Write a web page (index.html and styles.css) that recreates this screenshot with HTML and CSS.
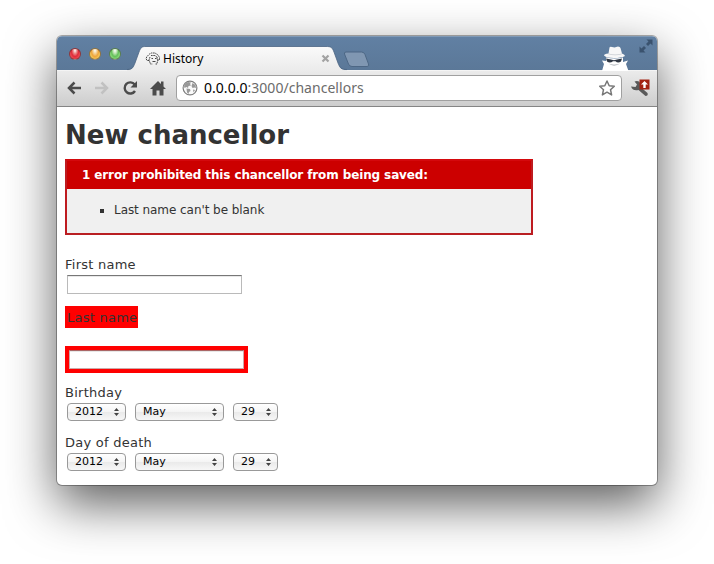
FILE: index.html
```html
<!DOCTYPE html>
<html lang="en">
<head>
<meta charset="utf-8">
<title>History</title>
<link rel="stylesheet" href="styles.css">
</head>
<body>
<div class="window">
  <header class="tabstrip">
    <div class="lights"><i class="light red"></i><i class="light yellow"></i><i class="light green"></i></div>
    <div class="tab">
      <svg class="tab-shape" width="224" height="25" viewBox="0 0 224 25">
        <defs><linearGradient id="tabfill" x1="0" y1="0" x2="0" y2="1"><stop offset="0" stop-color="#fafafa"/><stop offset="1" stop-color="#ebebeb"/></linearGradient></defs>
        <path d="M1 24C6 24 7 22 9 17L13 6C15 1 16 .5 20 .5H200C205 .5 206 1 208 6L212 17C214 22 215 24 221 24V25H1Z" fill="url(#tabfill)"/>
        <path d="M1 23.500C6 23.500 7 22 9 17L13 6C15 1 16 .5 20 .5H200C205 .5 206 1 208 6L212 17C214 22 215 23.500 221 23.500" fill="none" stroke="#4b6583" stroke-width=".8"/>
      </svg>
      <svg class="favicon" width="16" height="14" viewBox="0 0 16 14" fill="none" stroke="#333" stroke-width=".9">
        <path d="M4 8.500H2L1 6.500L2 4.500L4.500 2L6.500 1H10L13 3L14.500 5.500V8H12.500M5 5L4 8L5.500 12H7.500M12 5L12.500 8.500L12 12H10.500M6 3.500H10L12 5" stroke-dasharray="1.600 .7"/>
        <path d="M6.500 6.500H8M10 6.500H11.500M7.500 9.500H10.500" />
      </svg>
      <span class="tab-title">History</span>
      <svg class="tab-close" width="9" height="9" viewBox="0 0 9 9"><path d="M1.500 1.500L7.500 7.500M7.500 1.500L1.500 7.500" stroke="#a3a3a3" stroke-width="2.200"/></svg>
    </div>
    <svg class="newtab" width="28" height="17" viewBox="0 0 28 17"><path d="M3 1H18.500Q21 1 22 3.500L25.500 13Q26.500 15.500 24 15.500H9Q6.500 15.500 5.500 13L1.500 3Q1 1 3 1Z" fill="#8097b2" stroke="#4d6785"/></svg>
    <svg class="incognito" width="28" height="25" viewBox="0 0 28 25">
      <path d="M7.500 7.500L8.500 1.500Q9 .500 11 1L13.500 1.500L17 .500Q19 .500 19.500 2L21 7.500Q24 8.500 24 10Q20 12 13 12Q5 12 3 9.500Q3 8 7.500 7.500Z" fill="#f7f7f7"/>
      <path d="M7.500 7.500Q14 9.500 21 7.500L20.900 8.200Q14 10.200 7.400 8.200Z" fill="#c9cdd2"/>
      <path d="M5 11.500Q14 13.500 22 11.500L22 16L27 14.500L25 18L27.500 25H1L3 18L1 14.500L5 15Z" fill="#fff"/>
      <path d="M5 12.500Q9 13 13 14.200Q17 13 21 12.500L20 15.500Q17 17.500 14.500 15.200H12Q9 17.500 6 15.500Z" fill="#303844"/>
      <path d="M7.500 17.500Q13 21.500 19 17.500Q13 20 7.500 17.500Z" fill="#8b929b"/>
    </svg>
    <svg class="expand" width="16" height="16" viewBox="0 0 16 16" fill="#3a526e"><path d="M8.500 1.500H14.500V7.500L12.500 5.500L10 8L8 6L10.500 3.500ZM1.500 8.500L3.500 10.500L6 8L8 10L5.500 12.500L7.500 14.500H1.500Z"/></svg>
  </header>
  <nav class="toolbar">
    <svg class="back" width="16" height="16" viewBox="0 0 16 16"><path d="M8.500 2.500L3 8L8.500 13.500M3 8H15" fill="none" stroke="#4b4b4b" stroke-width="2.500"/></svg>
    <svg class="forward" width="16" height="16" viewBox="0 0 16 16"><path d="M7.500 2.500L13 8L7.500 13.500M13 8H1" fill="none" stroke="#c1c1c1" stroke-width="2.500"/></svg>
    <svg class="reload" width="16" height="16" viewBox="0 0 16 16"><path d="M12.700 4.500A5.600 5.600 0 1 0 13 11" fill="none" stroke="#4b4b4b" stroke-width="2.400"/><path d="M15 1V7.500H8.500Z" fill="#4b4b4b"/></svg>
    <svg class="home" width="16" height="16" viewBox="0 0 16 16"><path d="M8 1L11 4V1.500H13.500V6.500L16 9H13.500V15.500H9.500V10.500H6.500V15.500H2.500V9H0Z" fill="#4b4b4b"/></svg>
    <div class="omnibox">
      <svg class="globe" width="16" height="16" viewBox="0 0 16 16"><circle cx="8" cy="8" r="6.900" fill="#fafafa" stroke="#808080" stroke-width="1.200"/><path d="M3 3.500L6 2L9 2.500L8 4L9 5.500L6.500 6L6 8L4.500 7L2.500 8L2 6ZM4.500 8.500L8 9L8.500 11L7 12L6.500 14L5 12.500ZM10.500 3L13.500 5L14 8L12.500 7.500L10.500 8L9.500 6ZM11 9.500L13 10L11.500 12.500Z" fill="#999"/></svg>
      <span class="url"><b>0.0.0.0</b>:3000/chancellors</span>
      <svg class="star" width="18" height="18" viewBox="0 0 18 18"><path d="M9 2L11.200 6.700L16.300 7.200L12.500 10.700L13.600 15.900L9 13.200L4.400 15.900L5.500 10.700L1.700 7.200L6.800 6.700Z" fill="#fff" stroke="#777" stroke-width="1.500" stroke-linejoin="round"/></svg>
    </div>
    <svg class="wrench" width="20" height="19" viewBox="0 0 20 19"><path d="M1 7.500L5.500 8L7 5.500L4.500 2.500Q9 1 10.500 4.500Q11.200 7 10.500 8L17.500 14Q18.500 17 15.500 17L8.500 11Q3 12.500 1 7.500Z" fill="#5a5a5a"/><path d="M9.500 .5H19.500V10.500H9.500Z" fill="#a32312"/><path d="M14.500 2L18 5.500H15.700V9H13.300V5.500H11Z" fill="#fff"/></svg>
  </nav>
  <main class="page">
    <h1>New chancellor</h1>
    <section class="errors">
      <h2>1 error prohibited this chancellor from being saved:</h2>
      <ul><li>Last name can't be blank</li></ul>
    </section>
    <div class="field first">
      <label>First name</label>
      <div class="input"></div>
    </div>
    <div class="field-error-label"><label>Last name</label></div>
    <div class="field-error-input"><div class="input"></div></div>
    <div class="field">
      <label>Birthday</label>
      <div class="selects">
        <div class="select year">2012<i class="arrows"></i></div>
        <div class="select month">May<i class="arrows"></i></div>
        <div class="select day">29<i class="arrows"></i></div>
      </div>
    </div>
    <div class="field death">
      <label>Day of death</label>
      <div class="selects">
        <div class="select year">2012<i class="arrows"></i></div>
        <div class="select month">May<i class="arrows"></i></div>
        <div class="select day">29<i class="arrows"></i></div>
      </div>
    </div>
  </main>
</div>
</body>
</html>
```
FILE: styles.css
```css
* { box-sizing: border-box; }
body { margin: 0; padding: 36px 57px 0; height: 564px; overflow: hidden; background: #fff; font-family: "DejaVu Sans", Verdana, sans-serif; color: #333; }
.window { width: 600px; height: 449px; border-radius: 5px; background: #fff; overflow: hidden; box-shadow: 0 0 0 1px rgba(0,0,0,.3), 0 19px 50px rgba(0,0,0,.64); }
svg { display: block; flex: none; }

.tabstrip { height: 35px; display: flex; align-items: flex-start; background: linear-gradient(#6180a3, #5b7898); border-top: 1px solid #809ab6; border-bottom: 1px solid #f4f4f4; }
.lights { display: flex; gap: 8px; padding: 11px 0 0 12px; width: 70px; flex: none; }
.light { width: 12px; height: 12px; border-radius: 50%; border: 1px solid rgba(50,40,40,.5); flex: none; }
.red { background: radial-gradient(ellipse at 50% 15%, #fff 0, #eb8e8b 25%, #e02c3a 50%, #fd6c6c 100%); }
.yellow { background: radial-gradient(ellipse at 50% 15%, #fff 0, #f5d398 25%, #efa53b 50%, #ffef7d 100%); }
.green { background: radial-gradient(ellipse at 50% 15%, #fff 0, #bfe4b3 25%, #65c05a 50%, #b3fc9d 100%); }
.tab { position: relative; width: 224px; height: 26px; margin-top: 9px; margin-left: -1px; flex: none; display: flex; align-items: center; padding: 0 20px 1px 19px; }
.tab-shape { position: absolute; left: 0; top: 0; }
.favicon, .tab-title, .tab-close { position: relative; }
.tab-title { margin-left: 2px; flex: 1; font: 12px/16px "Noto Sans", sans-serif; color: #000; }
.newtab { margin: 14px 0 0 -7px; }
.incognito { margin: 9px 9px 0 auto; }
.expand { margin: 1px 3px 0 0; }

.toolbar { height: 36px; padding: 0 7px 1px 9px; display: flex; align-items: center; background: linear-gradient(#ebebeb, #cdcdcd); border-bottom: 1px solid #858585; }
.forward, .reload, .home { margin-left: 12px; }
.omnibox { width: 446px; height: 26px; margin-left: 10px; padding: 0 5px; display: flex; align-items: center; background: #fff; border: 1px solid #a0a0a0; border-radius: 4px; flex: none; }
.url { flex: 1; margin-left: 6px; font: 14px/20px "Noto Sans", sans-serif; letter-spacing: .03px; color: #6b6b6b; }
.url b { font-weight: 400; color: #000; }
.wrench { margin-left: 8px; }

.page { padding: 0 8px; font-size: 13px; line-height: 18px; }
h1 { margin: 13px 0 0; font-size: 26px; line-height: 30px; font-weight: 700; }
.errors { width: 468px; height: 76px; margin-top: 9px; border: 2px solid; border-color: #d4090d #be1b20 #b91f22; background: #f0f0f0; }
h2 { margin: 0; height: 28px; padding: 0 15px; background: #c00; color: #fff; font-size: 12px; line-height: 28px; font-weight: 700; letter-spacing: -.12px; white-space: nowrap; }
ul { margin: 12px 0 0; padding: 0 0 0 47px; list-style: square; font-size: 12px; line-height: 18px; letter-spacing: -.06px; }
label { display: block; height: 19px; line-height: 18px; letter-spacing: .25px; white-space: nowrap; }
.field.first { margin-top: 21px; }
.input { width: 175px; height: 19px; margin-left: 2px; background: #fff; border: 1px solid #bababa; border-top: 1px solid #777; box-shadow: inset 0 1px 0 #e8e8e8; }
.field-error-label { margin-top: 12px; width: 73px; height: 22px; padding: 3px 2px 0; background: #f00; }
.field-error-input { width: 183px; height: 27px; margin: 18px 0 11px; padding: 4px 4px 4px 2px; background: #f00; }
.field-error-input .input { border-color: #a66 #caa #caa; }
.selects { display: flex; gap: 9px; margin-left: 2px; }
.select { display: flex; align-items: center; justify-content: space-between; height: 18px; padding: 0 6px 0 7px; border: 1px solid #999; border-radius: 4px; background: linear-gradient(#fff, #f5f5f5 48%, #eaeaea 52%, #f7f7f7); color: #000; font: 11px/14px "DejaVu Sans", sans-serif; }
.year { width: 59px; }
.month { width: 89px; }
.day { width: 45px; }
.arrows { width: 5px; height: 8px; background: #444; clip-path: polygon(50% 0, 100% 38%, 0 38%, 50% 0, 50% 100%, 0 62%, 100% 62%, 50% 100%); }
.death { margin-top: 13px; }
```
